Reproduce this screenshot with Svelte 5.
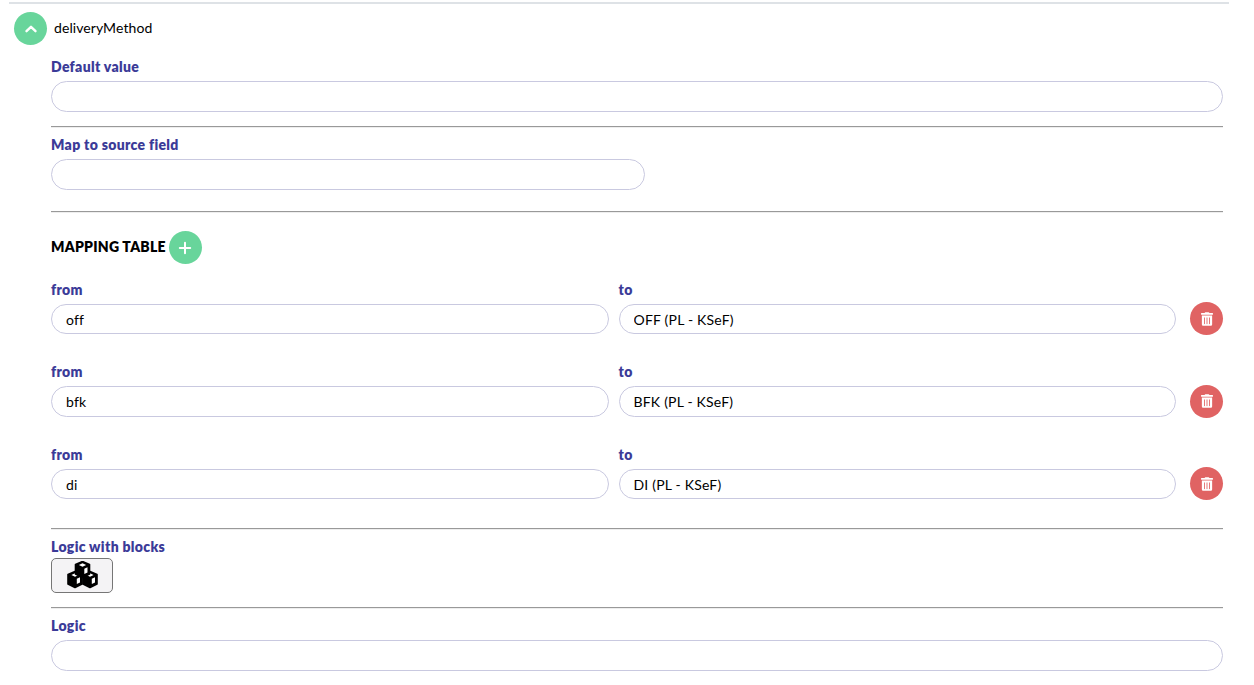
<script>
    const rows = [
        { from: 'off', to: 'OFF (PL - KSeF)' },
        { from: 'bfk', to: 'BFK (PL - KSeF)' },
        { from: 'di', to: 'DI (PL - KSeF)' }
    ];
    // the three cubes of the blocks icon, top one drawn last
    const cubes = [
        { x: 8, y: 10.5 },
        { x: 23, y: 10.5 },
        { x: 15.5, y: 0.5 }
    ];
</script>

<div class="page">
    <section class="field">
        <header class="field-head">
            <button class="round green" aria-label="Collapse">
                <svg width="14" height="14" viewBox="0 0 14 14" fill="none" stroke="currentColor" stroke-width="2.4" stroke-linecap="round" stroke-linejoin="round">
                    <path d="M2.5 9.2 7 4.8l4.5 4.4"/>
                </svg>
            </button>
            <span class="field-name">deliveryMethod</span>
        </header>

        <div class="body">
            <div class="block first">
                <span class="label">Default value</span>
                <input class="input tall" type="text" />
            </div>
            <hr />
            <div class="block">
                <span class="label">Map to source field</span>
                <input class="input tall half" type="text" />
            </div>
            <hr class="wide" />

            <div class="table-head">
                <span class="table-title">MAPPING TABLE</span>
                <button class="round green" aria-label="Add">
                    <svg width="14" height="14" viewBox="0 0 14 14" fill="none" stroke="currentColor" stroke-width="2" stroke-linecap="round">
                        <path d="M7 1.8v10.4M1.8 7h10.4"/>
                    </svg>
                </button>
            </div>

            <div class="rows">
                {#each rows as row}
                    <div class="row">
                        <div class="cell">
                            <span class="label">from</span>
                            <input class="input" type="text" value={row.from} />
                        </div>
                        <div class="cell">
                            <span class="label">to</span>
                            <input class="input" type="text" value={row.to} />
                        </div>
                        <button class="round red" aria-label="Delete">
                            <svg width="12" height="14" viewBox="0 0 448 512" fill="currentColor">
                                <path d="M32 464a48 48 0 0 0 48 48h288a48 48 0 0 0 48-48V128H32zm272-256a16 16 0 0 1 32 0v224a16 16 0 0 1-32 0zm-96 0a16 16 0 0 1 32 0v224a16 16 0 0 1-32 0zm-96 0a16 16 0 0 1 32 0v224a16 16 0 0 1-32 0zM432 32H312l-9.4-18.7A24 24 0 0 0 281.1 0H166.8a23.72 23.72 0 0 0-21.4 13.3L136 32H16A16 16 0 0 0 0 48v32a16 16 0 0 0 16 16h416a16 16 0 0 0 16-16V48a16 16 0 0 0-16-16z"/>
                            </svg>
                        </button>
                    </div>
                {/each}
            </div>

            <hr class="after-table" />
            <div class="block">
                <span class="label">Logic with blocks</span>
                <button class="blocks-btn" aria-label="Open blocks editor">
                    <svg width="31" height="28" viewBox="0 0 31 28">
                        {#each cubes as c}
                            <g transform="translate({c.x} {c.y})">
                                <path d="M0 0 7 3v9.5L0 16l-7-3.5V3z" fill="#000" stroke="#000" stroke-width="1.6" stroke-linejoin="round"/>
                                <path d="M0 1.8 3.6 3.5 0 5.2-3.6 3.5z" fill="#fff"/>
                                <path d="M1.8 7.2 5 5.8v5.2L1.8 12.6z" fill="#fff"/>
                            </g>
                        {/each}
                    </svg>
                </button>
            </div>
            <hr class="after-blocks" />
            <div class="block">
                <span class="label">Logic</span>
                <input class="input tall" type="text" />
            </div>
        </div>
    </section>
</div>

<style>
    :global(body) {
        background: #fff;
        font-family: "Lato", "Noto Sans", sans-serif;
        color: #000;
    }

    .page {
        padding: 2px 25px 0 9px;
        height: 683px;
        overflow: hidden;
    }

    .field {
        border-top: 2px solid #dee2e6;
    }

    .field-head {
        display: flex;
        align-items: center;
        gap: 7px;
        padding: 8px 0 0 5px;
    }

    .field-name {
        font-size: 14px;
        line-height: 20px;
        letter-spacing: 0.08px;
        margin-top: -2px;
    }

    .round {
        width: 33px;
        height: 33px;
        border: none;
        border-radius: 50%;
        padding: 0;
        display: flex;
        align-items: center;
        justify-content: center;
        color: #fff;
        flex: none;
    }

    .green {
        background: #68d59b;
    }

    .red {
        background: #e06363;
        align-self: flex-end;
        margin: 0 0 -1px 4px;
    }

    .body {
        padding: 0 6px 0 42px;
    }

    .block {
        display: flex;
        flex-direction: column;
        align-items: flex-start;
    }

    .block.first {
        margin-top: 12px;
    }

    .label {
        display: block;
        font-size: 14px;
        line-height: 20px;
        font-weight: 800;
        letter-spacing: 0.32px;
        color: #3b3b98;
        margin-bottom: 4px;
    }

    .input {
        box-sizing: border-box;
        display: block;
        width: 100%;
        height: 30.5px;
        border: 1px solid #c9c9e0;
        border-radius: 16px;
        padding: 0 14px;
        font: 14px "Lato", "Noto Sans", sans-serif;
        letter-spacing: 0.2px;
        color: #000;
        background: #fff;
        outline: none;
    }

    .input.tall {
        height: 31px;
    }

    .input.half {
        width: 594px;
    }

    hr {
        border: none;
        border-top: 1px solid #999;
        border-bottom: 1px solid #eee;
        margin: 14px 0 7px;
    }

    hr.wide {
        margin: 21px 0 0;
    }

    .table-head {
        display: flex;
        align-items: center;
        gap: 3px;
        margin-top: 18px;
    }

    .table-title {
        font-size: 14px;
        line-height: 20px;
        font-weight: 800;
        letter-spacing: 0.25px;
        margin-top: -2px;
    }

    .rows {
        display: flex;
        flex-direction: column;
        gap: 28.1px;
        margin-top: 15.8px;
    }

    .row {
        display: flex;
        gap: 10px;
    }

    .cell {
        flex: 1;
        min-width: 0;
    }

    .blocks-btn {
        box-sizing: border-box;
        width: 62px;
        height: 35px;
        margin-top: -3px;
        border: 1px solid #767676;
        border-radius: 5px;
        background: #f4f3f5;
        padding: 0;
        display: flex;
        align-items: center;
        justify-content: center;
    }

    hr.after-table {
        margin: 28.5px 0 7px;
    }

    hr.after-blocks {
        margin: 14px 0 7px;
    }
</style>
